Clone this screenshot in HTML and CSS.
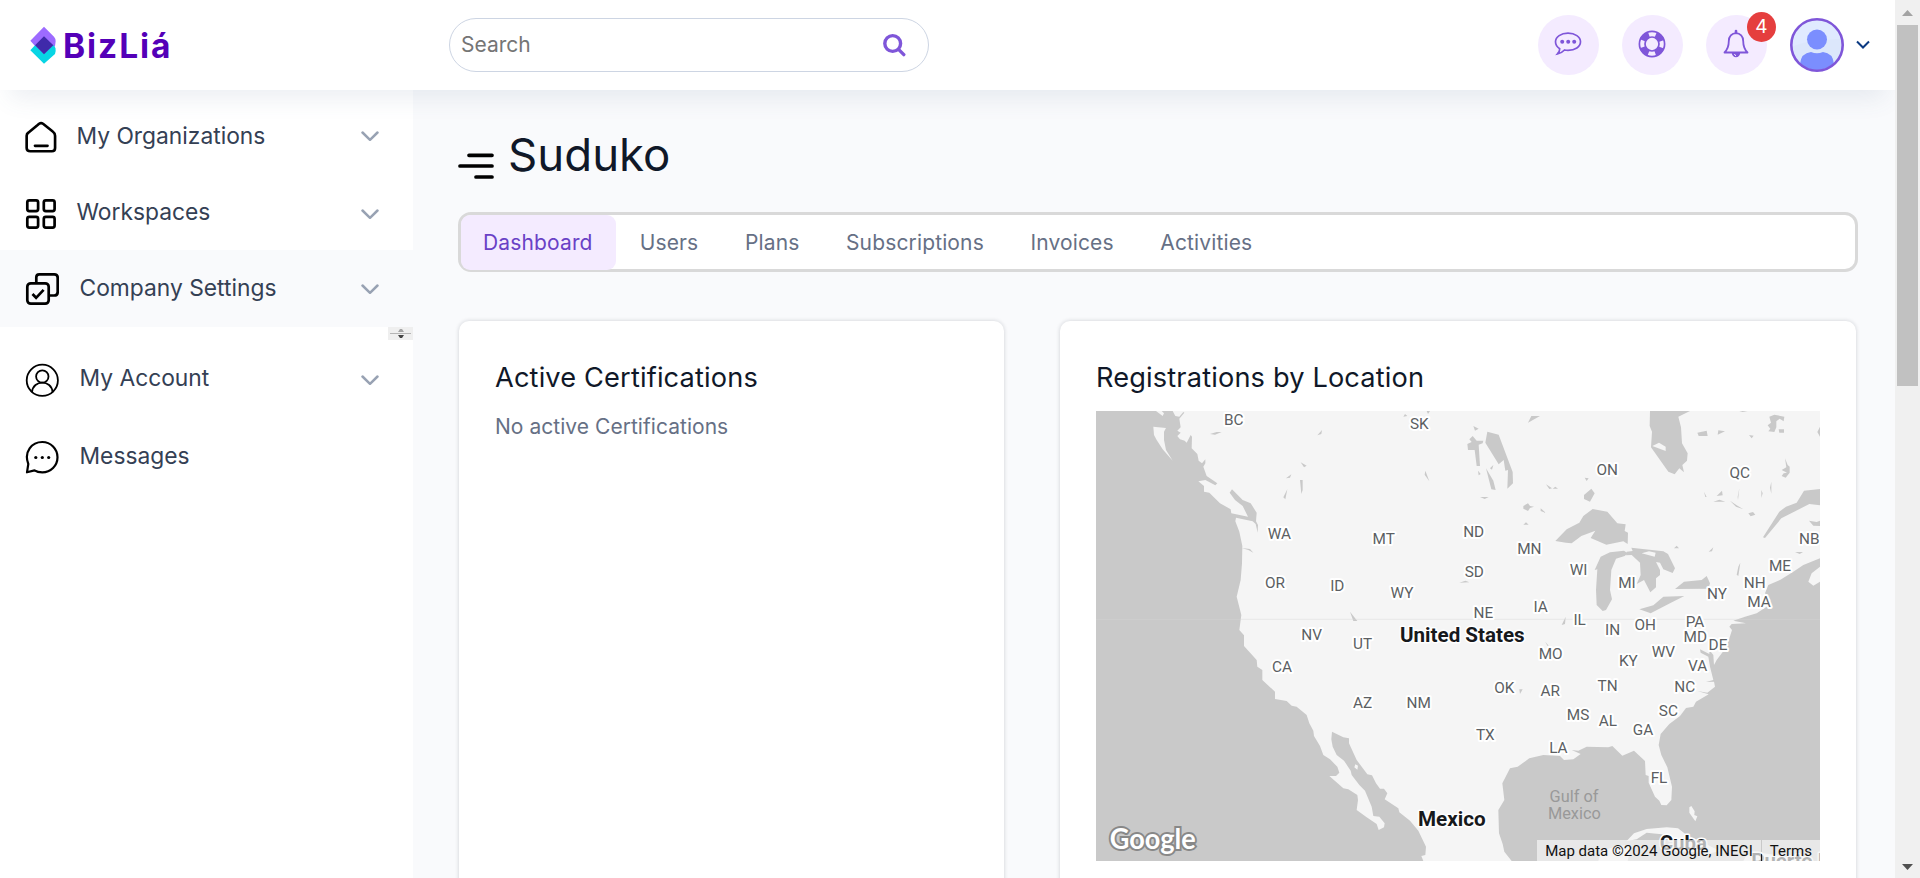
FILE: index.html
```
<!DOCTYPE html>
<html lang="en">
<head>
<meta charset="utf-8">
<title>BizLiá</title>
<link rel="stylesheet" href="styles.css">
</head>
<body>
<div class="app">
  <header class="header">
    <div class="brand">
      <svg class="brand-mark" width="26" height="38" viewBox="0 0 78 114">
        <path d="M42 2 72 32q5 5 5 14L75 61 42 90 1 44Z" fill="#9d6bff"/>
        <path d="M1 73 15 58 42 84 70 57q8 7 7 18l-2 9-33 29Z" fill="#08d5e4"/>
        <path d="M42 31 70 58 42 85 15 58Z" fill="#3f2aaa"/>
      </svg>
      <span class="brand-name">BizLiá</span>
    </div>
    <label class="search">
      <input class="search-input" type="text" placeholder="Search">
      <svg width="24" height="24" viewBox="0 0 24 24" fill="none" stroke="#7f56d9" stroke-width="3.4" stroke-linecap="round"><circle cx="10.7" cy="10.5" r="7.9"/><path d="m16.8 16.6 5 5"/></svg>
    </label>
    <div class="actions">
      <button class="round"><svg width="28" height="26" viewBox="0 0 28 26"><path d="M14 2.2c7 0 12.5 3.5 12.5 8.6S21 19.3 14 19.3c-1.300 0-2.400-.1-3.500-.3-1.800 2-4 3.300-7 3.900 1.500-1.700 2.300-3.300 2.200-5.200C3 16 1.500 13.600 1.500 10.800 1.500 5.700 7 2.200 14 2.200Z" fill="none" stroke="#7f56d9" stroke-width="1.700"/><g fill="#7f56d9"><circle cx="8.200" cy="10.700" r="2"/><circle cx="14.200" cy="10.700" r="2"/><circle cx="20.200" cy="10.700" r="2"/></g></svg></button>
      <button class="round"><svg width="28" height="28" viewBox="0 0 28 28" fill="none" stroke="#7f56d9"><circle cx="14" cy="14" r="12.600" stroke-width="1.700"/><circle cx="14" cy="14" r="7" stroke-width="1.700"/><circle cx="14" cy="14" r="9.900" stroke-width="6" stroke-dasharray="8.600 6.950" stroke-dashoffset="-3.500"/></svg></button>
      <button class="round"><svg width="28" height="30" viewBox="0 0 28 30"><path d="M2.500 23.500c3.500-3.500 4.300-7 4.300-11.500 0-4.500 3-7.800 7.200-7.800s7.200 3.300 7.200 7.800c0 4.500.8 8 4.300 11.500Z" fill="none" stroke="#7f56d9" stroke-width="1.800" stroke-linejoin="round"/><path d="M14 2v2" stroke="#7f56d9" stroke-width="2.600" stroke-linecap="round"/><path d="M9.800 24h8.400a4.200 4.200 0 0 1-8.400 0Z" fill="#7f56d9"/><path d="M12.500 25a2 2 0 0 0 1.500 1.700" fill="none" stroke="#f4ebff"/></svg><span class="badge">4</span></button>
      <svg class="avatar" width="54" height="54" viewBox="0 0 54 54"><defs><clipPath id="face"><circle cx="27" cy="27" r="25"/></clipPath></defs><circle cx="27" cy="27" r="25.500" fill="#e0eaff"/><g clip-path="url(#face)"><path d="M0 30Q14 22 54 21V54H0Z" fill="#dce7fb"/><g fill="#7b8efe"><circle cx="27" cy="21.500" r="10"/><path d="M10 52V46q1-11 11-12 6 2.500 12 0 10 1 11 12v6Z"/></g></g><circle cx="27" cy="27" r="25.700" fill="none" stroke="#7f56d9" stroke-width="2.600"/></svg>
      <svg class="caret" width="14" height="10" viewBox="0 0 14 10"><path d="m1 1.500 6 6 6-6" fill="none" stroke="#0b3a82" stroke-width="2"/></svg>
    </div>
  </header>
  <div class="body">
    <nav class="sidebar">
      <a class="item first"><svg class="icon" width="34" height="34" viewBox="0 0 34 34" fill="none" stroke="#000" stroke-width="2.700"><path d="M2.300 15.500q0-2 1.700-3.200L13.500 4.500 15 3.200q2-1.400 4 0l9.900 7.900q2.400 1.700 2.400 4.400V28q0 3.300-3.300 3.300H6Q2.300 31.300 2.300 28Z" transform="translate(-.6 -.4) scale(.98)"/><path d="M10 24.800h12.500" stroke-linecap="round"/></svg><span>My Organizations</span><svg class="chev" width="18" height="11" viewBox="0 0 18 11"><path d="m1.500 1.500 7.500 7.300 7.500-7.300"/></svg></a>
      <a class="item grid"><svg class="icon" width="34" height="34" viewBox="0 0 34 34" fill="none" stroke="#000" stroke-width="2.700"><rect x="2.300" y="2.300" width="10.800" height="10.800" rx="2"/><rect x="18.800" y="2.300" width="10.800" height="10.800" rx="2"/><rect x="2.300" y="18.800" width="10.800" height="10.800" rx="2"/><rect x="18.800" y="18.800" width="10.800" height="10.800" rx="2"/></svg><span>Workspaces</span><svg class="chev" width="18" height="11" viewBox="0 0 18 11"><path d="m1.500 1.500 7.500 7.300 7.500-7.300"/></svg></a>
      <a class="item wide active"><svg class="icon" width="34" height="34" viewBox="0 0 34 34" fill="none" stroke="#000" stroke-width="2.700"><rect x="2.300" y="11.300" width="21.400" height="20.400" rx="3.500"/><path d="M11.300 11V5.300q0-3 3-3h15q3.400 0 3.400 3.400v14.300q0 3.500-3.500 3.500H24M7.500 22l3.600 3.800 7.500-8"/></svg><span>Company Settings</span><svg class="chev" width="18" height="11" viewBox="0 0 18 11"><path d="m1.500 1.500 7.500 7.300 7.500-7.300"/></svg></a>
      <div class="stepper"><svg width="25" height="13" viewBox="0 0 25 13"><path d="M2 6.500h21" stroke="#b5b5b5"/><path d="M10 5l2-3h2l2 3Z" fill="#a3a3a3"/><path d="M10 8h6l-2 3h-2Z" fill="#444"/></svg></div>
      <a class="item wide account"><svg class="icon" width="34" height="34" viewBox="0 0 34 34" fill="none" stroke="#000" stroke-width="1.800"><circle cx="17.300" cy="17.300" r="15.600"/><circle cx="17.300" cy="13.500" r="6.200"/><path d="M7 29.200C8 16.500 26.600 16.500 27.600 29.200"/></svg><span>My Account</span><svg class="chev" width="18" height="11" viewBox="0 0 18 11"><path d="m1.500 1.500 7.500 7.300 7.500-7.300"/></svg></a>
      <a class="item wide messages"><svg class="icon" width="34" height="34" viewBox="0 0 34 34"><path d="M2 32.300 3.300 24C-1.500 11.500 7 2 17.300 2a15.200 15.200 0 1 1 0 30.400q-4.800 0-7.800-2Z" fill="none" stroke="#000" stroke-width="2.200" stroke-linejoin="round"/><circle cx="10.800" cy="17.500" r="1.600"/><circle cx="17.300" cy="17.500" r="1.600"/><circle cx="23.700" cy="17.500" r="1.600"/></svg><span>Messages</span></a>
    </nav>
    <main class="main">
      <div class="heading">
        <svg width="36" height="27" viewBox="0 0 36 27" stroke="#000" stroke-width="3.700" stroke-linecap="round"><path d="M11 2.300h23M2 13h32M18 24h16"/></svg>
        <h1>Suduko</h1>
      </div>
      <div class="tabs"><a class="tab on">Dashboard</a><a class="tab">Users</a><a class="tab">Plans</a><a class="tab">Subscriptions</a><a class="tab">Invoices</a><a class="tab">Activities</a></div>
      <div class="cards">
        <section class="card"><h2>Active Certifications</h2><p>No active Certifications</p></section>
        <section class="card"><h2>Registrations by Location</h2>
          <div class="map">
            <svg class="map-canvas" width="724" height="450" viewBox="18 33 2172 1350">
              <rect x="18" y="33" width="2172" height="1350" fill="#f5f5f5"/>
              <g fill="#c9c9c9">
                <path d="M18 33H198L218 48 222 40 215 33H248L256 48 268 50 280 36 283 38 268 56 272 82 262 92 272 98 262 108 270 118 284 122 290 128 302 105 306 110 305 145 322 162 326 182 336 190 346 178 346 190 340 200 350 228 382 250 376 256 346 240 325 244 342 258 342 275 358 278 390 310 422 328 424 340 474 350 458 318 435 300 419 278 426 268 458 300 482 310 500 338 498 364 504 375 503 398 497 372 488 364 438 353 436 364 448 395 457 438 456 490 452 540 440 590 454 645 448 690 462 706 462 738 500 780 502 800 517 810 517 840 555 875 555 897 590 903 605 917 620 920 650 945 658 970 670 992 672 1008 690 1038 700 1065 720 1078 742 1100 748 1118 738 1128 718 1128 760 1165 775 1168 802 1185 804 1200 800 1230 830 1252 860 1272 866 1290 882 1282 884 1270 868 1250 850 1248 845 1220 825 1172 808 1155 785 1125 782 1112 762 1082 740 1065 728 1040 724 1018 726 995 760 1012 777 1015 777 1030 800 1080 832 1123 846 1126 858 1150 870 1166 882 1166 892 1180 884 1198 925 1225 928 1237 960 1262 985 1292 1008 1340 1006 1365 994 1368 1000 1383H18Z"/>
                <path d="M1265 1383 1243 1355 1238 1332 1227 1300 1225 1230 1243 1200 1237 1150 1260 1105 1283 1100 1318 1075 1360 1065 1410 1068 1422 1080 1450 1078 1472 1062 1445 1050 1465 1052 1490 1040 1555 1042 1567 1038 1597 1067 1632 1052 1665 1083 1667 1125 1676 1128 1676 1148 1695 1190 1708 1202 1714 1215 1730 1216 1744 1200 1746 1160 1732 1102 1714 1065 1706 1035 1712 1002 1738 972 1770 948 1788 924 1810 920 1818 905 1856 883 1822 873 1852 878 1875 860 1872 845 1848 846 1870 840 1860 800 1855 770 1832 758 1830 748 1858 762 1858 750 1870 765 1872 795 1880 780 1910 740 1926 690 1918 680 1925 672 1968 670 1930 662 1965 650 2000 640 2030 620 2042 600 2025 580 2035 555 2070 540 2110 515 2140 495 2190 475V1383Z"/>
                <path d="M455 444 480 447 490 458 475 450ZM360 102l20-6 15 0-20 8ZM682 106l14-16-2 12ZM632 187l18 10-8 5ZM588 235l16-12-4 10ZM630 240h8v30l-4 12ZM580 292l12-24-6 30ZM1006 212l12 32-14-20ZM940 50l5-8 7 6ZM1010 33h10l-6 9ZM780 635l22 28h-12Z"/>
                <path d="M1192 95 1226 104 1244 152 1268 216 1269 250 1252 266 1254 210 1246 212 1241 180 1226 193 1186 128ZM1132 132 1145 126 1138 118 1148 108 1160 122 1180 122 1178 130 1166 134 1170 198 1160 198 1154 150 1134 150ZM1150 78 1166 86 1155 92ZM1188 205 1210 242 1217 270 1204 268ZM1200 205l10-10-4 14ZM1164 212l8 10-6 4ZM1314 68 1324 48 1350 48ZM1170 291h26l-12 6ZM1300 318l14-8 6 8 12 2-12 4-6 9-14-7ZM1352 325l16 14-16-6ZM1300 374l8-7 8 7ZM1368 253l18 12-8 2ZM1388 266l8-6 8 6ZM1484 233l12 2-6 8ZM1482 285 1504 266 1514 280 1500 305 1482 297Z"/>
                <path d="M1680 33H1800L1765 50 1773 82 1776 130 1793 160 1791 182 1777 195 1782 217 1768 205 1754 223 1735 215 1683 142 1686 95 1679 78ZM1822 98 1850 92 1853 108 1826 108ZM1885 91l20 3-22 10ZM1977 105l14 2-6 8ZM1948 33h25l-15 3ZM2038 50l15-6 30 6-2 14-12-8-10 8v18l-6 14-18-2 6-8-8-10 10-8ZM2066 88h16v10h-14ZM2190 80v30l-8-14ZM2085 175l8 20 6 5v18l-12 15-12-5 6-8 10-2-16-8 14-8ZM1842 275l8 16-4 0ZM1880 288l16-16 2 14ZM1870 305l18-6 18 6ZM1948 265 1944 300 1943 290ZM2014 270l4 10-4 14ZM2044 245v36l-4-18ZM1920 302l20 14 20 12-22-8ZM1975 340l14-4 7 8-14 5ZM1752 445l8-8 7 8ZM1856 455l14-13-4 12ZM1945 500l6-12-6 40-5-4Z"/>
                <path d="M1396 423 1430 388 1468 368 1480 348 1508 327 1552 335 1582 370 1607 373 1604 393 1614 398 1613 432 1600 424 1549 434 1502 414 1516 392 1474 408 1445 430 1428 428Z"/>
                <path d="M1514 510 1532 470 1560 457 1602 452 1613 460 1604 468 1578 476 1564 510 1560 570 1566 598 1548 630 1538 633 1520 615 1518 570 1522 508Z"/>
                <path d="M1610 455 1628 453 1624 443 1720 454 1734 462 1755 505 1748 519 1720 508 1710 488 1698 486 1710 510 1710 525 1698 535 1698 562 1681 577 1662 540 1640 552 1652 525 1650 488 1625 465 1608 466Z"/>
                <path d="M1755 567 1782 545 1835 540 1850 528 1860 550 1855 566ZM1648 628 1690 616 1720 590 1783 588 1740 610 1682 640ZM2019 412 2068 335 2088 320 2120 308 2142 272 2190 267V316L2158 312 2074 355 2025 414ZM2157 362 2180 366 2190 362V378L2170 377ZM2115 456h24l-10 6ZM1108 548l18-6 12 5ZM1415 675l12-25-2 22ZM1366 725l10 12-4 0ZM1288 868h10l-8 14Z"/>
              </g>
              <g fill="#f5f5f5">
                <path d="M190 80 228 84 222 95 222 120 228 150 248 182 218 148 200 120 192 105ZM796 1093l8 4-2 12-9-7ZM2190 500 2165 520 2155 545 2170 557 2190 545ZM1687 138l20-10 20 12v13ZM1655 460l22-6 20 4-3 12Z"/>
                <path d="M1798 1222 1804 1218 1814 1234 1813 1245 1822 1249 1816 1264 1798 1238ZM1610 1323 1632 1300 1670 1287 1730 1282 1764 1285 1790 1305 1840 1328 1890 1353 1850 1362 1770 1350 1755 1320 1715 1303 1670 1298 1640 1318ZM1525 1383l8-30 50-15 40-2-10 47ZM1970 1364l50-4 60 8 30 15H1960Z"/>
              </g>
              <path d="M18 658H2190" stroke="#d6d6d6" stroke-width="3" opacity=".4"/>
              <g class="states">
                <text x="431" y="76">BC</text><text x="988" y="88">SK</text><text x="568" y="417">WA</text><text x="881" y="432">MT</text><text x="555" y="564">OR</text><text x="742" y="573">ID</text><text x="936" y="595">WY</text>
                <text x="1552" y="225">ON</text><text x="1949" y="235">QC</text><text x="1151" y="411">ND</text><text x="1318" y="462">MN</text><text x="1153" y="532">SD</text><text x="1466" y="524">WI</text><text x="1611" y="564">MI</text><text x="1180" y="654">NE</text><text x="1352" y="636">IA</text><text x="1469" y="675">IL</text><text x="1568" y="705">IN</text><text x="1666" y="690">OH</text><text x="1815" y="680">PA</text><text x="1881" y="598">NY</text><text x="1994" y="564">NH</text><text x="2007" y="621">MA</text><text x="2070" y="512">ME</text><text x="2158" y="432">NB</text>
                <text x="665" y="721">NV</text><text x="818" y="747">UT</text><text x="576" y="817">CA</text><text x="818" y="924">AZ</text><text x="986" y="924">NM</text><text x="1382" y="778">MO</text><text x="1243" y="879">OK</text><text x="1381" y="887">AR</text><text x="1615" y="798">KY</text><text x="1553" y="874">TN</text><text x="1720" y="770">WV</text><text x="1816" y="727">MD</text><text x="1884" y="750">DE</text><text x="1823" y="812">VA</text><text x="1784" y="877">NC</text><text x="1735" y="949">SC</text><text x="1464" y="959">MS</text><text x="1554" y="978">AL</text><text x="1659" y="1004">GA</text><text x="1186" y="1021">TX</text><text x="1405" y="1060">LA</text><text x="1707" y="1148">FL</text>
              </g>
              <g class="gulf"><text x="1452" y="1205">Gulf of</text><text x="1453" y="1257">Mexico</text></g>
              <g class="country"><text x="930" y="727" textLength="374" lengthAdjust="spacingAndGlyphs">United States</text><text x="984" y="1278" textLength="203" lengthAdjust="spacingAndGlyphs">Mexico</text><text x="1709" y="1350" textLength="142" lengthAdjust="spacingAndGlyphs">Cuba</text><text x="1984" y="1405">Puerto Rico</text></g>
              <text class="google" x="59" y="1348" textLength="258" lengthAdjust="spacingAndGlyphs">Google</text>
            </svg>
            <div class="credits"><span>Map data ©2024 Google, INEGI</span><span>Terms</span></div>
          </div>
        </section>
      </div>
    </main>
  </div>
</div>
<div class="scrollbar"><svg width="25" height="25" viewBox="0 0 25 25"><path d="M7 16l5.500-6 5.500 6Z" fill="#a3a3a3"/></svg><div class="thumb"></div><svg class="down" width="25" height="25" viewBox="0 0 25 25"><path d="M7 11h11l-5.500 6Z" fill="#505050"/></svg></div>
</body>
</html>
```
FILE: styles.css
```
* { box-sizing: border-box; }
body { margin: 0; display: flex; height: 878px; overflow: hidden; font-family: Inter, "Noto Sans", sans-serif; background: #f9fafc; }
.app { width: 1895px; height: 878px; overflow: hidden; display: flex; flex-direction: column; }
.header { flex: none; height: 90px; background: #fff; display: flex; align-items: center; position: relative; z-index: 2; padding-left: 30px; box-shadow: 0 18px 25px -10px rgba(71, 96, 135, .11); }
.brand { width: 419px; display: flex; align-items: center; }
.brand-mark { margin-right: 7px; }
.brand-name { font: 700 33.500px/40px Inter, sans-serif; color: #5400b8; letter-spacing: 1.900px; padding-top: 1px; }
.search { width: 480px; height: 54px; border: 1px solid #cdd5e3; border-radius: 27px; display: flex; align-items: center; padding: 0 22px 0 11px; }
.search-input { flex: 1; min-width: 0; border: 0; outline: 0; padding: 0; background: none; font: 400 21px/28px Inter, sans-serif; color: #333; }
.search-input::placeholder { color: #757575; opacity: 1; }
.actions { margin-left: 609px; display: flex; align-items: center; }
.round { width: 61px; height: 60px; margin: 0 23px 0 0; padding: 0 2px 3px 0; border: 0; border-radius: 50%; background: #f4ebff; display: flex; align-items: center; justify-content: center; position: relative; }
.round svg { flex: none; }
.badge { position: absolute; top: -3px; right: -9px; width: 29px; height: 30px; border-radius: 50%; background: #e53e3e; color: #fff; font: 400 19px/30px Inter, sans-serif; text-align: center; }
.caret { margin-left: 12px; }
.body { flex: 1; display: flex; min-height: 0; }
.sidebar { width: 413px; background: #fff; padding-top: 8px; flex: none; }
.item { height: 76px; display: flex; align-items: center; padding: 0 34px 0 25px; font-size: 22.800px; line-height: 30px; color: #344054; }
.item span { margin-left: 17.500px; margin-top: -1px; flex: 1; }
.item.wide span { margin-left: 20.500px; }
.item.active { background: #f9fafc; height: 77px; }
.icon { margin-top: 3px; }
.grid .icon { margin-top: 6px; }
.active .icon { margin-top: 1px; }
.account .icon { margin-top: 4px; }
.messages { margin-top: 2px; }
.messages .icon { margin-top: 2px; }
.chev { margin-top: 1px; fill: none; stroke: #98a2b3; stroke-width: 2.500; stroke-linecap: round; stroke-linejoin: round; }
.grid .chev, .account .chev { margin-top: 4px; }
.stepper { width: 25px; height: 13px; margin-left: auto; background: #efefef; }
.stepper svg { display: block; }
.main { flex: 1; padding: 42px 37px 0 45px; min-width: 0; }
.heading { height: 80px; display: flex; align-items: flex-start; }
.heading svg { margin-top: 21px; }
h1 { margin: -5px 0 0 14px; font-weight: 400; font-size: 45.600px; line-height: 56px; color: #101828; }
.tabs { height: 60px; border: 3px solid #d9d9d9; border-radius: 13px; background: #fff; display: flex; }
.tab { height: 55px; padding: 0 23.300px; font-size: 21px; letter-spacing: .14px; line-height: 55px; color: #667085; border-radius: 8px; }
.tab.on { padding: 0 23.800px 0 22px; background: #f4ebff; color: #6941c6; border-radius: 9px; }
.cards { margin-top: 49px; display: grid; grid-template-columns: 545px 796px; gap: 56px; height: 600px; padding-left: 1px; }
.card { background: #fff; border-radius: 10px; padding: 38px 36px; box-shadow: 0 0 4px rgba(16, 24, 40, .18); }
h2 { margin: 0; font-weight: 400; font-size: 27.200px; letter-spacing: .15px; line-height: 38px; color: #101828; white-space: nowrap; }
.card p { margin: 14px 0 0; font-size: 21px; letter-spacing: .04px; line-height: 32px; color: #667085; }
.map { position: relative; width: 724px; height: 450px; margin-top: 14px; overflow: hidden; }
.map-canvas { display: block; font-family: Roboto, sans-serif; }
.states { font-size: 46px; fill: #5c5f63; text-anchor: middle; paint-order: stroke; stroke: #fff; stroke-width: 12px; stroke-linejoin: round; }
.gulf { font-size: 49px; fill: #999; text-anchor: middle; }
.country { font-size: 61px; font-weight: 700; fill: #17191c; paint-order: stroke; stroke: #fff; stroke-width: 9px; stroke-linejoin: round; }
.google { font-family: Lato, sans-serif; font-size: 84px; font-weight: 700; fill: #fff; paint-order: stroke; stroke: #888; stroke-width: 12px; }
.credits { position: absolute; right: 0; bottom: 0; height: 21px; display: flex; font: 400 15px/22px Roboto, sans-serif; color: #111; white-space: nowrap; }
.credits span { background: rgba(245, 245, 245, .7); padding: 0 8px; }
.credits span + span { margin-left: 1px; }
.scrollbar { width: 25px; height: 878px; background: #f0f0f0; display: flex; flex-direction: column; }
.scrollbar svg { display: block; flex: none; }
.thumb { width: 21px; height: 361px; margin-left: 2px; background: #c1c1c1; }
.down { margin-top: auto; }
```
